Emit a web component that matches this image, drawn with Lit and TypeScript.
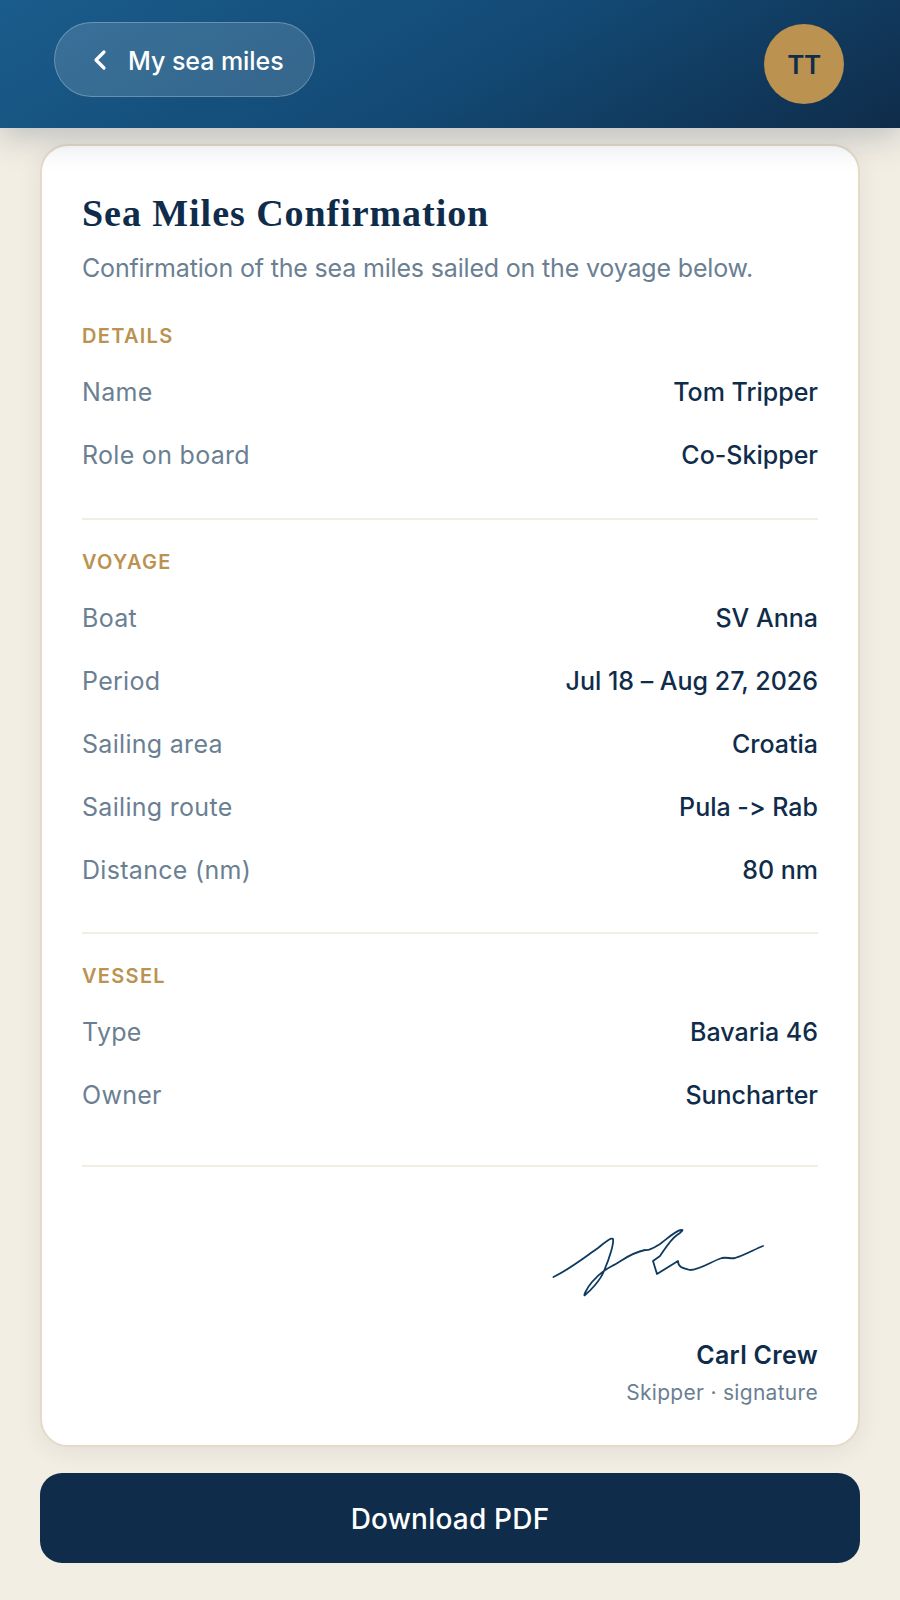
import { LitElement, html, css, svg } from "lit";
import { customElement } from "lit/decorators.js";

const sections = [
  { title: "Details", rows: [["Name", "Tom Tripper"], ["Role on board", "Co-Skipper"]] },
  { title: "Voyage", rows: [["Boat", "SV Anna"], ["Period", "Jul 18 – Aug 27, 2026"], ["Sailing area", "Croatia"], ["Sailing route", "Pula -> Rab"], ["Distance (nm)", "80 nm"]] },
  { title: "Vessel", rows: [["Type", "Bavaria 46"], ["Owner", "Suncharter"]] },
];

@customElement("app-root")
export class AppRoot extends LitElement {
  static styles = css`
    :host { display: block; width: 900px; height: 1600px; overflow: hidden; background: #f3eee3; font-family: "Inter", "Liberation Sans", sans-serif; color: #0f2c4a; font-variant-ligatures: none; font-feature-settings: "calt" 0; }
    * { box-sizing: border-box; }
    .top { position: relative; z-index: 2; height: 128px; padding: 22px 56px 0 54px; display: flex; justify-content: space-between; align-items: flex-start; background: linear-gradient(150deg, #1a5c8c 0%, #134a75 52%, #0f2c4a 100%); box-shadow: 0 8px 32px rgba(15, 44, 74, 0.25); }
    .back { height: 75px; width: 261px; border-radius: 38px; border: 1px solid rgba(255,255,255,.25); background: rgba(255,255,255,.14); display: flex; align-items: center; gap: 19px; padding: 2px 0 0 36px; color: #fff; font-size: 25px; font-weight: 500; letter-spacing: -0.05px; }
    .back svg { flex: none; margin-top: -2px; }
    .avatar { width: 80px; height: 80px; margin-top: 2px; border-radius: 50%; background: #bb9250; display: flex; align-items: center; justify-content: center; font-size: 26px; font-weight: 600; letter-spacing: -0.5px; color: #0f2c4a; }
    .card { margin: 16px 40px 0; height: 1303px; background: #fff; border: 2px solid #e4dac6; border-radius: 28px; padding: 45px 40px 0; box-shadow: 0 4px 24px rgba(15,44,74,.08); }
    h1 { margin: 0; font: 700 38px/44px "Liberation Serif", serif; letter-spacing: 0.95px; color: #0f2c4a; }
    .sub { margin: 17px 0 0; font-size: 25px; line-height: 32px; color: #6b7f93; letter-spacing: -0.17px; }
    h2 { margin: 0 0 11.5px; font-size: 20px; line-height: 26px; font-weight: 600; letter-spacing: 1.3px; text-transform: uppercase; color: #bb9250; }
    .sec { padding: 0 0 31px; border-bottom: 2px solid #f3eee3; margin-bottom: 29px; }
    .sec:first-of-type { margin-top: 39px; }
    .sec:nth-of-type(3) { padding-bottom: 38px; }
    .row { display: flex; justify-content: space-between; height: 63px; align-items: center; font-size: 25px; }
    .row span:first-child { color: #6b7f93; letter-spacing: 0.3px; }
    .row span:last-child { font-weight: 500; }
    .sign { display: flex; flex-direction: column; align-items: flex-end; }
    .sign svg { margin: 31px 52px 0 0; }
    .name { font-size: 25px; font-weight: 600; letter-spacing: 0.3px; line-height: 32px; margin-top: 40px; }
    .role { font-size: 21px; line-height: 28px; letter-spacing: 0.3px; color: #6b7f93; margin-top: 8px; }
    .dl { margin: 26px 40px 0; height: 90px; border-radius: 22px; background: #0f2c4a; color: #fff; display: flex; align-items: center; justify-content: center; padding-top: 2px; font-size: 28px; font-weight: 500; letter-spacing: 0.2px; }
  `;
  render() {
    return html`
      <div class="top">
        <div class="back">
          <svg width="18" height="24" viewBox="0 0 18 24" fill="none" stroke="#fff" stroke-width="3.2" stroke-linecap="round" stroke-linejoin="round"><path d="M13 4 L5 12 L13 20"/></svg>
          My sea miles
        </div>
        <div class="avatar">TT</div>
      </div>
      <div class="card">
        <h1>Sea Miles Confirmation</h1>
        <p class="sub">Confirmation of the sea miles sailed on the voyage below.</p>
        ${sections.map(s => html`<div class="sec"><h2>${s.title}</h2>${s.rows.map(r => html`<div class="row"><span>${r[0]}</span><span>${r[1]}</span></div>`)}</div>`)}
        <div class="sign">
          <svg width="214" height="72" viewBox="552 1228 214 72" fill="none" stroke="#0f3a5f" stroke-width="1.8" stroke-linecap="round" stroke-linejoin="round">
            ${svg`<path d="M553.5 1278 C570 1270 585 1258 598 1249 C605 1243 612 1238 613 1240 C614 1244 610 1258 604 1272 C600 1282 590 1292 585 1296 C583 1298 586 1290 592 1283 C598 1276 606 1270 612 1267 C622 1262 630 1254 645 1251 C650 1252 655 1248 660 1245 C667 1240 675 1232 681 1231 C684 1230 682 1233 677 1236 C670 1241 665 1250 660 1257 L653 1262 L657 1275 L678 1262 C678 1268 682 1269 690 1271 C700 1271 712 1262 722 1259 C728 1258 730 1260 735 1259 C745 1256 755 1250 763 1247"/>`}
          </svg>
          <div class="name">Carl Crew</div>
          <div class="role">Skipper · signature</div>
        </div>
      </div>
      <div class="dl">Download PDF</div>
    `;
  }
}
